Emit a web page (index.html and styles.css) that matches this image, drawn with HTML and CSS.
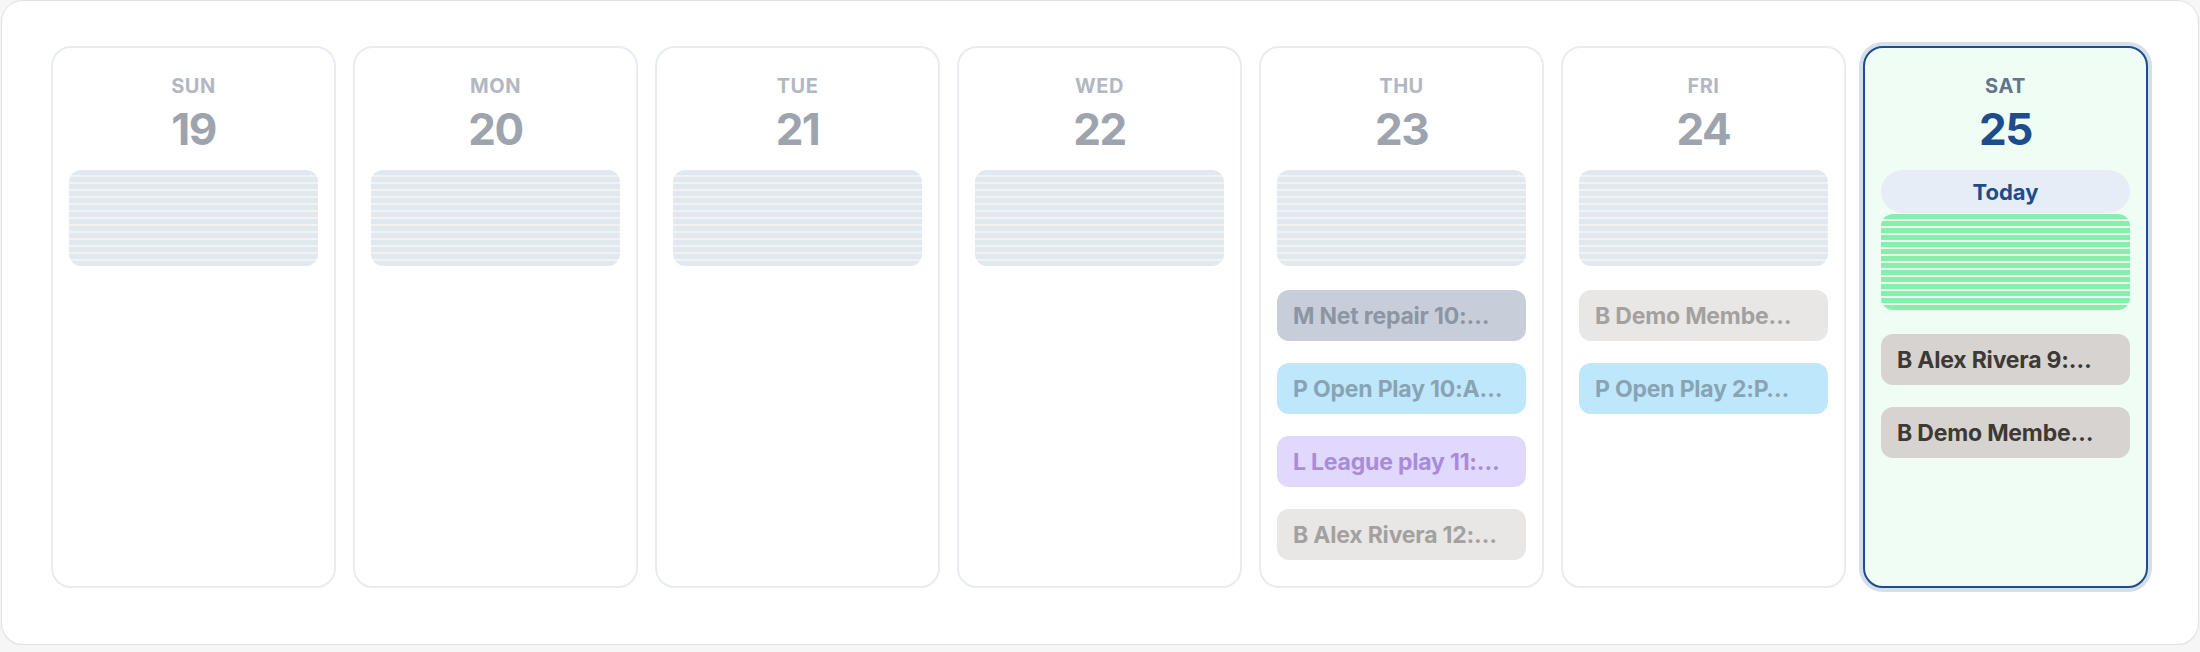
FILE: index.html
```html
<!DOCTYPE html>
<html lang="en">
<head>
<meta charset="utf-8">
<title>Week</title>
<link rel="stylesheet" href="styles.css">
</head>
<body>
<div class="card">
  <div class="week">
    <div class="day">
      <div class="day-name">Sun</div>
      <div class="day-num">19</div>
      <div class="slots"></div>
    </div>
    <div class="day">
      <div class="day-name">Mon</div>
      <div class="day-num">20</div>
      <div class="slots"></div>
    </div>
    <div class="day">
      <div class="day-name">Tue</div>
      <div class="day-num">21</div>
      <div class="slots"></div>
    </div>
    <div class="day">
      <div class="day-name">Wed</div>
      <div class="day-num">22</div>
      <div class="slots"></div>
    </div>
    <div class="day">
      <div class="day-name">Thu</div>
      <div class="day-num">23</div>
      <div class="slots"></div>
      <div class="events">
        <div class="event ev-m"><span class="tag">M</span> Net repair 10:…</div>
        <div class="event ev-p"><span class="tag">P</span> Open Play 10:A…</div>
        <div class="event ev-l"><span class="tag">L</span> League play 11:…</div>
        <div class="event ev-bp"><span class="tag">B</span> Alex Rivera 12:…</div>
      </div>
    </div>
    <div class="day">
      <div class="day-name">Fri</div>
      <div class="day-num">24</div>
      <div class="slots"></div>
      <div class="events">
        <div class="event ev-bp"><span class="tag">B</span> Demo Membe…</div>
        <div class="event ev-p"><span class="tag">P</span> Open Play 2:P…</div>
      </div>
    </div>
    <div class="day today">
      <div class="day-name">Sat</div>
      <div class="day-num">25</div>
      <div class="today-pill">Today</div>
      <div class="slots slots-today"></div>
      <div class="events">
        <div class="event ev-b"><span class="tag">B</span> Alex Rivera 9:…</div>
        <div class="event ev-b"><span class="tag">B</span> Demo Membe…</div>
      </div>
    </div>
  </div>
</div>
</body>
</html>
```
FILE: styles.css
```css
* { box-sizing: border-box; }

body {
  margin: 0;
  background: #f6f6f6;
  font-family: Inter, "Noto Sans", "DejaVu Sans", sans-serif;
}

.card {
  margin: 0 1px;
  background: #ffffff;
  border: 1px solid #e2e2e2;
  border-radius: 22px;
  padding: 45px 49px 56px;
  box-shadow: 0 1px 2px rgba(0, 0, 0, 0.05);
}

.week {
  display: grid;
  grid-template-columns: repeat(7, 285px);
  gap: 17px;
}

.day {
  display: flex;
  flex-direction: column;
  background: #ffffff;
  border: 2px solid #e8ecf1;
  border-radius: 20px;
  padding: 24px 16px 26px;
}

.day-name {
  font-size: 20px;
  line-height: 28px;
  font-weight: 650;
  letter-spacing: 0.5px;
  text-transform: uppercase;
  text-align: center;
  color: #b1b8c3;
}

.day-num {
  margin-top: 3px;
  font-size: 44px;
  line-height: 52px;
  font-weight: 650;
  letter-spacing: -1.5px;
  text-align: center;
  color: #9ea4ad;
}

.slots {
  margin-top: 15px;
  height: 96px;
  border-radius: 12px;
  background: repeating-linear-gradient(180deg, #e2e8f0 0 5px, #f2f2f0 5px 7px);
}

.events {
  margin-top: 24px;
  display: flex;
  flex-direction: column;
  gap: 22px;
}

.event {
  height: 51px;
  border-radius: 12px;
  padding: 0 16px;
  display: flex;
  align-items: center;
  font-size: 23px;
  font-weight: 650;
  letter-spacing: -0.2px;
  white-space: pre;
  overflow: hidden;
  text-overflow: ellipsis;
}

.tag { font-weight: 750; }

.ev-m { background: #c8ced9; color: #8c95a3; }
.ev-p { background: #bfe7fc; color: #88a3b4; }
.ev-l { background: #e0d8fd; color: #a98bd9; }
.ev-bp { background: #e8e7e5; color: #a3a1a0; }
.ev-b { background: #d6d3d1; color: #3d3935; }

.day.today {
  background: #f0fdf4;
  border-color: #1e4d8c;
  box-shadow: 0 0 0 4px #d5deea;
}

.today .day-name { color: #64748b; }
.today .day-num { color: #1e4d8c; }

.today-pill {
  margin-top: 15px;
  height: 43px;
  border-radius: 22px;
  background: #e6edf6;
  color: #1e4d8c;
  font-size: 22px;
  font-weight: 650;
  display: flex;
  align-items: center;
  justify-content: center;
}

.slots-today {
  margin-top: 1px;
  background: repeating-linear-gradient(180deg, #86efac 0 5px, #eef5ef 5px 7px);
}
```
